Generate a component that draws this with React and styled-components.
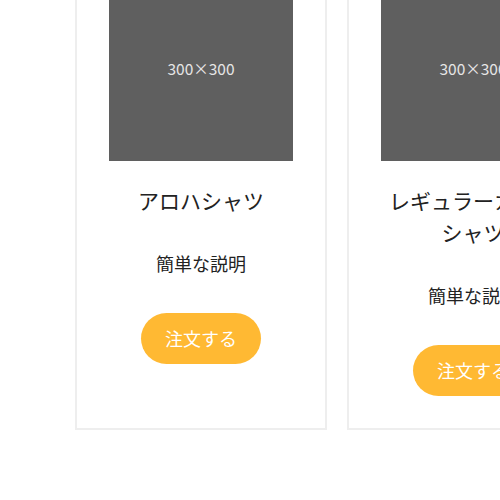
import React from 'react';
import styled, { createGlobalStyle } from 'styled-components';

const products = [
  { id: 1, name: 'アロハシャツ', text: '簡単な説明' },
  { id: 2, name: 'レギュラーカラーシャツ', text: '簡単な説明' },
  { id: 3, name: 'オックスフォードシャツ', text: '簡単な説明' },
];

const App = () => {
  return (
    <>
      <GlobalStyle />
      <Page>
        <CardList>
          {products.map((p) => (
            <Card key={p.id}>
              <Thumb>300×300</Thumb>
              <Title>{p.name}</Title>
              <Description>{p.text}</Description>
              <OrderButton type="button">注文する</OrderButton>
            </Card>
          ))}
        </CardList>
      </Page>
    </>
  );
};

export default App;

const GlobalStyle = createGlobalStyle`
  html, body {
    margin: 0;
    padding: 0;
    overflow: hidden;
    background: #fff;
  }
  body {
    font-family: "Noto Sans CJK JP", "Noto Sans", sans-serif;
    color: #222;
  }
`;

const Page = styled.div`
  width: 500px;
  height: 500px;
  overflow: hidden;
`;

const CardList = styled.div`
  display: flex;
  align-items: stretch;
  gap: 20px;
  margin-top: -57px;
  padding-left: 75px;
`;

const Card = styled.div`
  flex-shrink: 0;
  width: 248px;
  box-sizing: content-box;
  border: 2px solid #eeeeee;
  padding: 32px 0;
  display: flex;
  flex-direction: column;
  align-items: center;
  text-align: center;
`;

const Thumb = styled.div`
  width: 184px;
  height: 184px;
  padding-bottom: 2px;
  box-sizing: border-box;
  background: #5f5f5f;
  color: #e6e6e6;
  font-size: 15.5px;
  display: flex;
  align-items: center;
  justify-content: center;
`;

const Title = styled.h3`
  width: 184px;
  margin: 23px 0 0;
  font-size: 21px;
  font-weight: 400;
  line-height: 32px;
`;

const Description = styled.p`
  margin: 34px 0 0;
  font-size: 18px;
  line-height: 27px;
`;

const OrderButton = styled.button`
  margin: 36px 0 0;
  padding: 12px 24px;
  border: none;
  border-radius: 9999px;
  background: #ffb933;
  color: #fff;
  font-family: inherit;
  font-size: 18px;
  line-height: 27px;
  cursor: pointer;
`;
